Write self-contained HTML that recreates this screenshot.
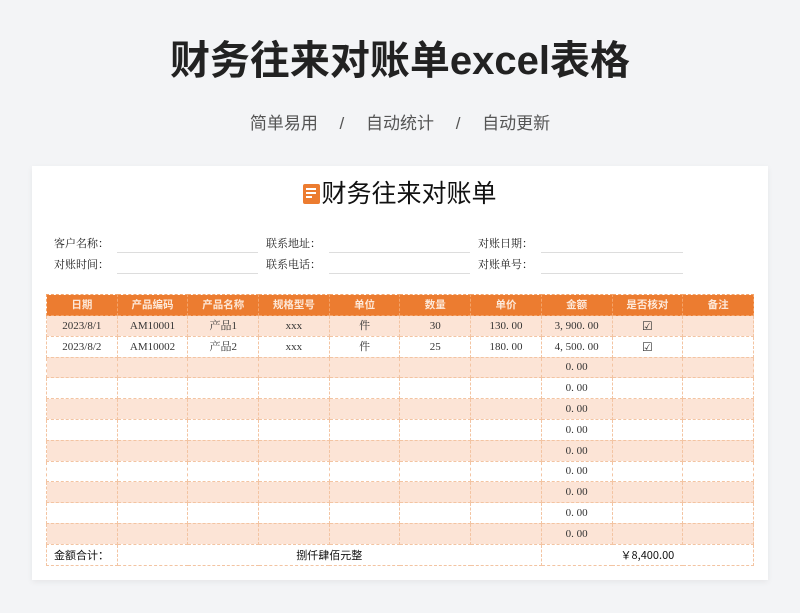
<!DOCTYPE html>
<html><head><meta charset="utf-8"><style>
*{margin:0;padding:0;box-sizing:border-box}
body{width:800px;height:613px;background:#f3f4f6;font-family:"Liberation Sans","Noto Sans CJK SC",sans-serif;position:relative;overflow:hidden}
.t{position:absolute;left:0;width:800px;text-align:center}
.sub{top:112px;font-size:17px;color:#555;line-height:24px}
.card{position:absolute;left:32px;top:166px;width:736px;height:414px;background:#fff;box-shadow:0 2px 6px rgba(0,0,0,.06)}
.ct{position:absolute;top:175px;left:0;width:800px;text-align:center;font-family:"Noto Sans CJK SC",sans-serif;font-size:25px;line-height:34px;color:#111}
.ic{display:inline-block;width:17px;height:20px;background:#ec7c30;border-radius:2px;vertical-align:-2px;position:relative;margin-right:1px}
.ic i{position:absolute;left:3px;height:2px;background:#fff}
.lb{position:absolute;font-family:"Noto Serif CJK SC",serif;font-size:11px;color:#222;line-height:14px}
.ln{position:absolute;height:1px;background:#ddd}
table{position:absolute;left:46px;top:294px;width:708px;border-collapse:collapse;font-family:"Liberation Serif","Noto Serif CJK SC",serif;font-size:11px;color:#333;table-layout:fixed}
td,th{height:20.8px;border:1px dashed #f3c4a2;text-align:center;padding:0;line-height:18px}
th{background:#ec7c30;color:#fde8d8;font-weight:bold;height:21px;border-color:#f4a46a;font-family:"Noto Sans CJK SC",sans-serif;font-size:10.5px}
tr.o td{background:#fce4d6}
.tot td{background:#fff;color:#111;font-family:"Noto Sans CJK SC",sans-serif}
.ck{font-weight:bold;font-size:12px;font-family:"DejaVu Sans",sans-serif}
</style></head><body>
<div class="t" style="top:36px;font-size:40px;font-weight:bold;color:#222;line-height:50px">财务往来对账单excel表格</div>
<div class="t sub">简单易用　 /　 自动统计　 /　 自动更新</div>
<div class="card"></div>
<div class="ct"><span class="ic"><i style="top:4px;width:10px"></i><i style="top:8px;width:10px"></i><i style="top:12px;width:6px"></i></span>财务往来对账单</div>
<div class="lb" style="left:54px;top:236px">客户名称：</div><div class="ln" style="left:117px;top:252px;width:141px"></div>
<div class="lb" style="left:266px;top:236px">联系地址：</div><div class="ln" style="left:329px;top:252px;width:141px"></div>
<div class="lb" style="left:478px;top:236px">对账日期：</div><div class="ln" style="left:541px;top:252px;width:142px"></div>
<div class="lb" style="left:54px;top:257px">对账时间：</div><div class="ln" style="left:117px;top:273px;width:141px"></div>
<div class="lb" style="left:266px;top:257px">联系电话：</div><div class="ln" style="left:329px;top:273px;width:141px"></div>
<div class="lb" style="left:478px;top:257px">对账单号：</div><div class="ln" style="left:541px;top:273px;width:142px"></div>
<table>
<tr><th>日期</th><th>产品编码</th><th>产品名称</th><th>规格型号</th><th>单位</th><th>数量</th><th>单价</th><th>金额</th><th>是否核对</th><th>备注</th></tr>
<tr class="o"><td>2023/8/1</td><td>AM10001</td><td>产品1</td><td>xxx</td><td>件</td><td>30</td><td>130. 00</td><td>3, 900. 00</td><td class="ck">☑</td><td></td></tr>
<tr><td>2023/8/2</td><td>AM10002</td><td>产品2</td><td>xxx</td><td>件</td><td>25</td><td>180. 00</td><td>4, 500. 00</td><td class="ck">☑</td><td></td></tr>
<tr class="o"><td></td><td></td><td></td><td></td><td></td><td></td><td></td><td>0. 00</td><td></td><td></td></tr>
<tr><td></td><td></td><td></td><td></td><td></td><td></td><td></td><td>0. 00</td><td></td><td></td></tr>
<tr class="o"><td></td><td></td><td></td><td></td><td></td><td></td><td></td><td>0. 00</td><td></td><td></td></tr>
<tr><td></td><td></td><td></td><td></td><td></td><td></td><td></td><td>0. 00</td><td></td><td></td></tr>
<tr class="o"><td></td><td></td><td></td><td></td><td></td><td></td><td></td><td>0. 00</td><td></td><td></td></tr>
<tr><td></td><td></td><td></td><td></td><td></td><td></td><td></td><td>0. 00</td><td></td><td></td></tr>
<tr class="o"><td></td><td></td><td></td><td></td><td></td><td></td><td></td><td>0. 00</td><td></td><td></td></tr>
<tr><td></td><td></td><td></td><td></td><td></td><td></td><td></td><td>0. 00</td><td></td><td></td></tr>
<tr class="o"><td></td><td></td><td></td><td></td><td></td><td></td><td></td><td>0. 00</td><td></td><td></td></tr>
<tr class="tot"><td style="text-align:left;padding-left:7px">金额合计：</td><td colspan="6">捌仟肆佰元整</td><td colspan="3">￥8,400.00</td></tr>
</table>
</body></html>
